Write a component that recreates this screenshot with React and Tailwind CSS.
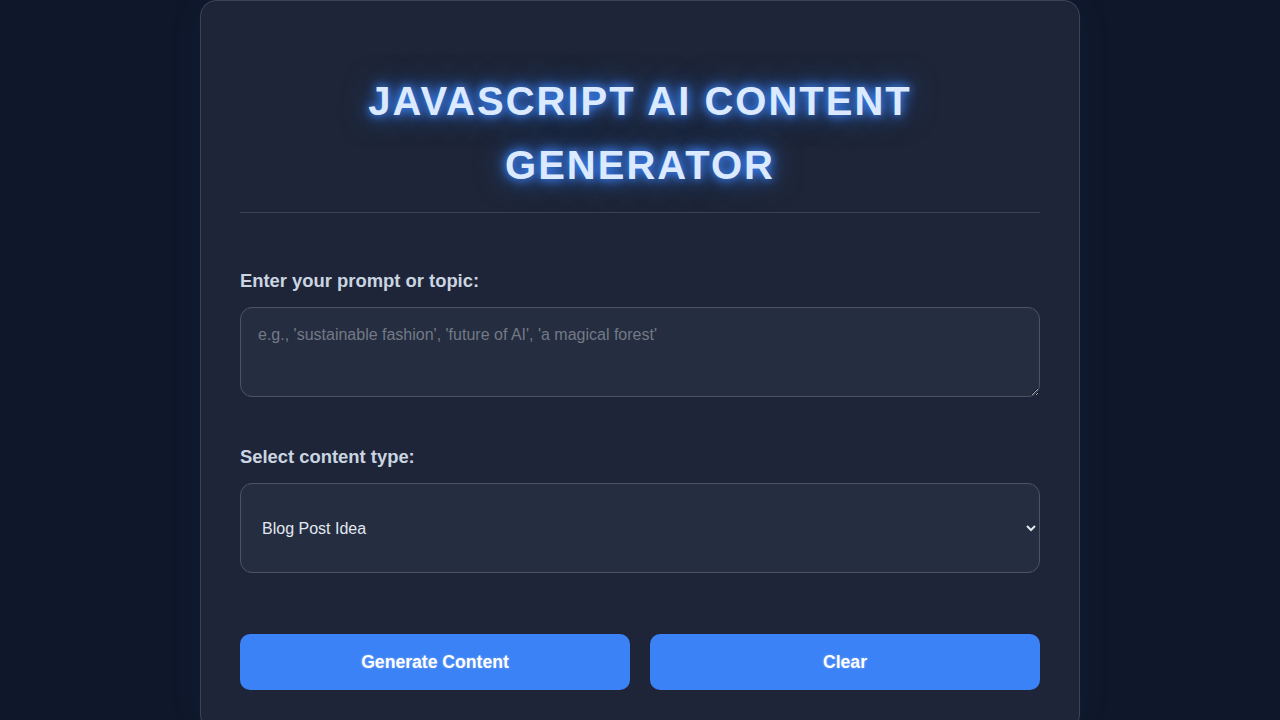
import React, { useState } from 'react';

const TYPES = ['Blog Post Idea', 'Social Media Caption', 'Product Description', 'Short Story Opening', 'Email Subject Line'];

export default function App() {
  const [prompt, setPrompt] = useState('');
  const [type, setType] = useState(TYPES[0]);

  const clear = () => {
    setPrompt('');
    setType(TYPES[0]);
  };

  return (
    <div className="min-h-screen bg-[#0f172a] flex justify-center font-['Liberation_Sans',Arial,sans-serif]">
      <div className="w-[880px] bg-[#1e2538] border border-[#3b4456] rounded-2xl px-[39px] pt-[40px] pb-10 shadow-[0_0_40px_rgba(59,130,246,0.06)] h-fit">
        {/* Header */}
        <div className="border-b border-[#3a4354] pb-[15px] pt-[28px]">
          <h1 className="text-center text-[40px] leading-[64px] font-bold uppercase tracking-[2px] text-[#dbeafe] [text-shadow:0_0_8px_#3b82f6,0_0_16px_#3b82f6,0_0_32px_rgba(59,130,246,0.5)]">
            JavaScript AI Content Generator
          </h1>
        </div>

        <div className="mt-[54px]">
          <label className="block text-[18.4px] font-bold text-[#cbd5e1] mb-[12px]">Enter your prompt or topic:</label>
          <textarea
            value={prompt}
            onChange={e => setPrompt(e.target.value)}
            placeholder="e.g., 'sustainable fashion', 'future of AI', 'a magical forest'"
            className="block w-full h-[90px] bg-[#252d40] border border-[#4a5466] rounded-xl px-[17px] py-[15px] text-base text-[#e2e8f0] placeholder:text-[#737a86] outline-none resize-y"
          />
        </div>

        <div className="mt-[46px]">
          <label className="block text-[18.4px] font-bold text-[#cbd5e1] mb-[13px]">Select content type:</label>
          <select
            value={type}
            onChange={e => setType(e.target.value)}
            className="block w-full h-[90px] bg-[#252d40] border border-[#4a5466] rounded-xl px-[17px] text-base text-[#e2e8f0] outline-none"
          >
            {TYPES.map(t => <option key={t} value={t}>{t}</option>)}
          </select>
        </div>

        <div className="mt-[61px] grid grid-cols-2 gap-5">
          <button className="h-14 rounded-[10px] bg-[#3b82f6] text-white text-[17.6px] font-bold [text-shadow:0_0_3px_rgba(255,255,255,0.3)]">
            Generate Content
          </button>
          <button onClick={clear} className="h-14 rounded-[10px] bg-[#3b82f6] text-white text-[17.6px] font-bold [text-shadow:0_0_3px_rgba(255,255,255,0.3)]">
            Clear
          </button>
        </div>
      </div>
    </div>
  );
}
